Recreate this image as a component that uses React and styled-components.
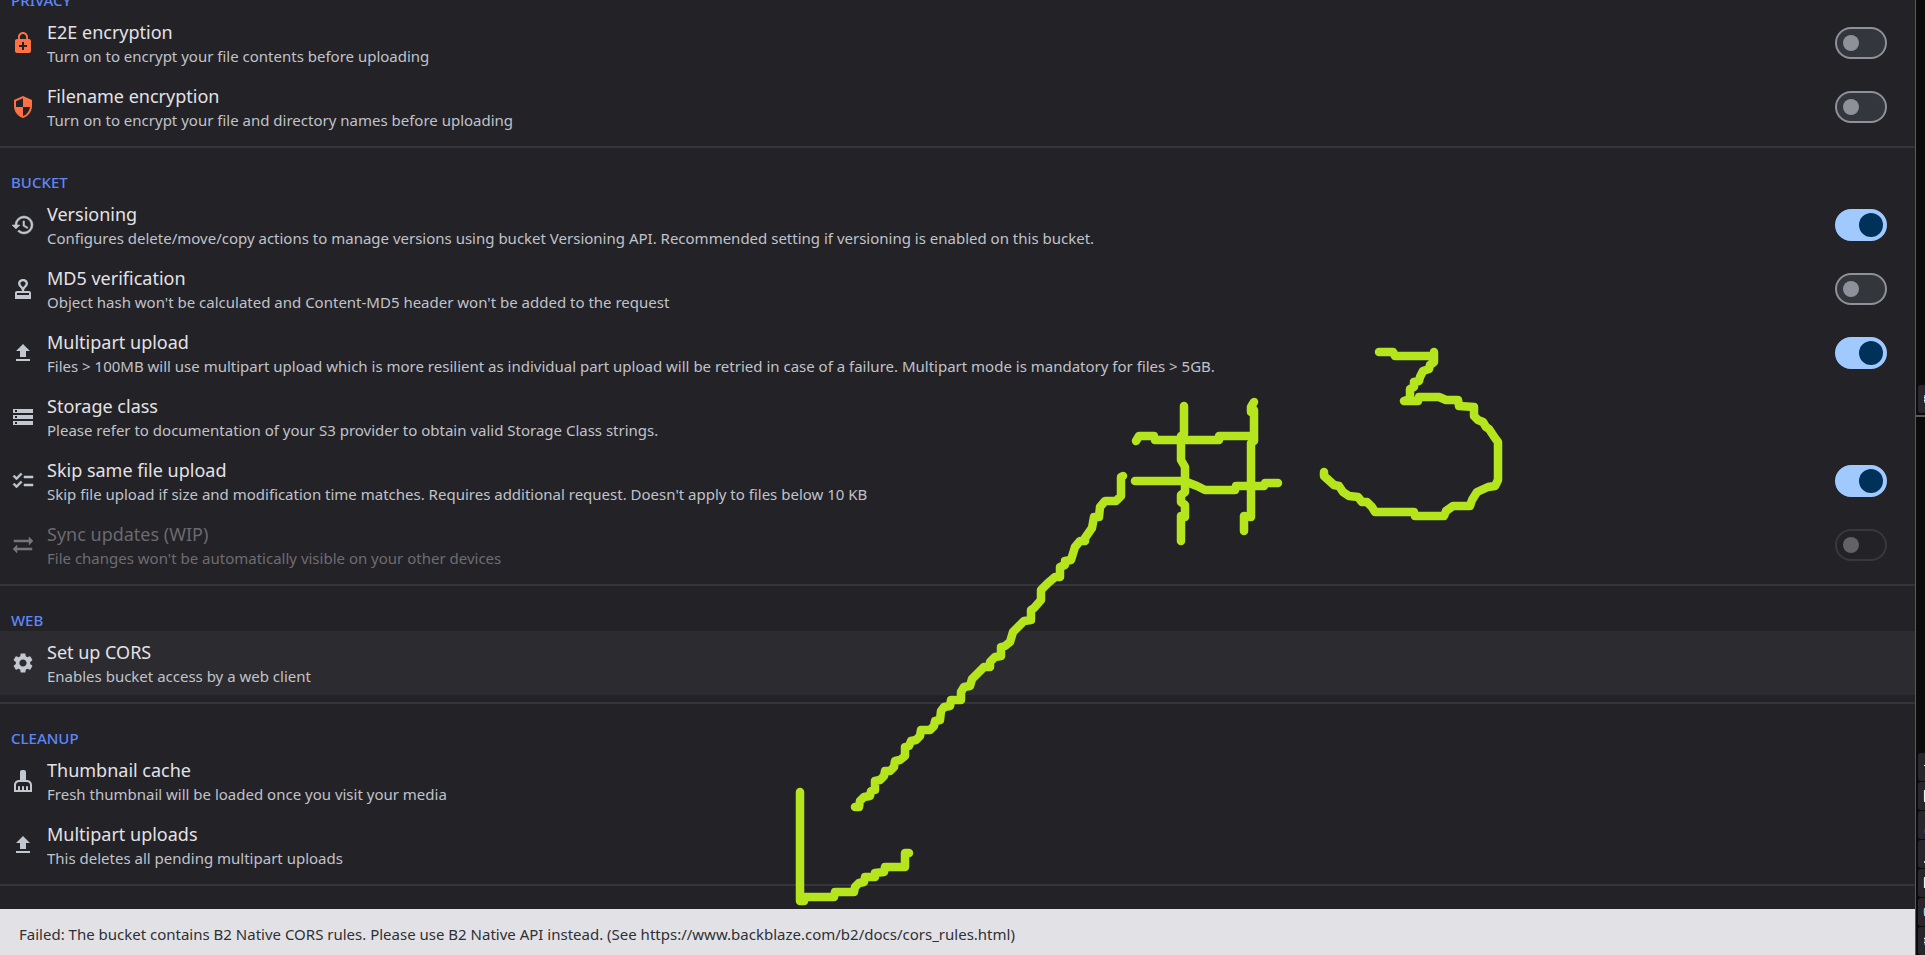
import React, { useLayoutEffect, useRef } from 'react';
import styled, { createGlobalStyle, css } from 'styled-components';
import {
  MdChecklist,
  MdCleaningServices,
  MdEnhancedEncryption,
  MdHistory,
  MdSecurity,
  MdSettings,
  MdStorage,
  MdSyncAlt,
  MdUpload,
} from 'react-icons/md';

const GlobalStyle = createGlobalStyle`
  *, *::before, *::after { box-sizing: border-box; }
  body {
    margin: 0;
    background: #232227;
    font-family: "Segoe UI", "Noto Sans", "Open Sans", sans-serif;
  }
`;

const Page = styled.div`
  position: relative;
  display: flex;
  height: 100vh;
  overflow: hidden;
`;

const SettingsPane = styled.main`
  flex: 1;
  min-width: 0;
  display: flex;
  flex-direction: column;
  background: #232227;
`;

const ScrollArea = styled.div`
  flex: 1;
  min-height: 0;
  overflow-y: auto;
  scrollbar-width: none;
  padding-bottom: 23px;
`;

const Section = styled.section`
  padding: 23px 0 7px;
  border-bottom: 2px solid #35343a;
`;

const SectionLabel = styled.h2`
  margin: 0;
  padding: 0 11px;
  font-size: 15px;
  line-height: 22px;
  font-weight: 500;
  color: #5f87f8;
`;

const rowStyles = css`
  display: flex;
  align-items: center;
  gap: 12px;
  width: 100%;
  height: 64px;
  margin: 0;
  padding: 0 28px 0 11px;
  border: 0;
  font: inherit;
  text-align: left;
  cursor: pointer;
  background: ${(p) => (p.$hovered ? '#2c2b30' : 'transparent')};
`;

const ToggleRow = styled.label`
  ${rowStyles}
`;

const ActionRow = styled.button`
  ${rowStyles}
`;

const RowIcon = styled.span`
  display: flex;
  flex: none;
  font-size: 24px;
  color: ${(p) => (p.$disabled ? '#77767a' : p.$accent ? '#ff7043' : '#c3c7cf')};

  svg {
    stroke-width: ${(p) => (p.$bold ? 0.5 : 0)};
  }

  path[fill='none'] {
    stroke: none;
  }
`;

const RowText = styled.span`
  flex: 1;
  min-width: 0;
  display: flex;
  flex-direction: column;
  padding-top: 2px;
`;

const RowTitle = styled.span`
  font-size: 18px;
  line-height: 24px;
  color: ${(p) => (p.$disabled ? '#6b6a6e' : '#e3e2e6')};
`;

const RowDescription = styled.span`
  font-size: 15px;
  line-height: 24px;
  color: ${(p) => (p.$disabled ? '#6e6d71' : '#c0c3ca')};
`;

const Switch = styled.input`
  appearance: none;
  flex: none;
  display: flex;
  align-items: center;
  width: 52px;
  height: 32px;
  margin: 0;
  padding: 0 6px;
  border: 2px solid #8e9199;
  border-radius: 16px;
  background: #33363a;
  cursor: inherit;

  &::before {
    content: '';
    width: 16px;
    height: 16px;
    border-radius: 50%;
    background: #8e9199;
  }

  &:checked {
    justify-content: flex-end;
    padding: 0 2px;
    border-color: #a0c9ff;
    background: #a0c9ff;
  }

  &:checked::before {
    width: 24px;
    height: 24px;
    background: #003259;
  }

  &:disabled {
    border-color: #39383d;
    background: transparent;
  }

  &:disabled::before {
    background: #636267;
  }
`;

const Snackbar = styled.div`
  flex: none;
  padding: 13px 19px 9px;
  background: #e2e2e6;
  color: #2f3033;
  font-size: 15px;
  line-height: 24px;
`;

const SidePanel = styled.aside`
  flex: none;
  display: flex;
  flex-direction: column;
  width: 10px;
  border-left: 1px solid #5a5a5a;
  background: #0c0b0c;
`;

const TabGroup = styled.div`
  flex: ${(p) => p.$grow} 1 0;
  min-height: 0;
  display: flex;
  flex-direction: column;
  justify-content: flex-end;
  gap: 1px;
  padding-left: 2px;
  overflow: hidden;

  &:first-child {
    padding-bottom: 2px;
    border-bottom: 2px solid #5a5a5a;
  }
`;

const Tab = styled.div`
  flex: none;
  display: flex;
  justify-content: flex-end;
  height: 28px;
  border-radius: 3px 0 0 3px;
  background: #28262b;
`;

const Annotation = styled.svg`
  position: absolute;
  top: 0;
  left: 0;
  pointer-events: none;
`;

function StampIcon(props) {
  return (
    <svg width="1em" height="1em" viewBox="0 0 24 24" fill="currentColor" {...props}>
      <path d="M18 14H6c-1.1 0-2 .9-2 2v6h16v-6c0-1.1-.9-2-2-2zm0 4H6v-2h12v2z" fillRule="evenodd" />
      <path
        d="M12 2C9 2 7 4 7 6.6 7 9.6 11 11 11 14.2h2c0-3.2 4-4.6 4-7.6C17 4 15 2 12 2zm0 2.2c1.6 0 2.6 1 2.6 2.3 0 1.3-1.3 2.2-2.6 3.8-1.3-1.6-2.6-2.5-2.6-3.8 0-1.3 1-2.3 2.6-2.3z"
        fillRule="evenodd"
      />
    </svg>
  );
}

const sections = [
  {
    label: 'PRIVACY',
    rows: [
      { icon: MdEnhancedEncryption, accent: true, title: 'E2E encryption', text: 'Turn on to encrypt your file contents before uploading', toggle: 'off' },
      { icon: MdSecurity, accent: true, title: 'Filename encryption', text: 'Turn on to encrypt your file and directory names before uploading', toggle: 'off' },
    ],
  },
  {
    label: 'BUCKET',
    rows: [
      { icon: MdHistory, bold: true, title: 'Versioning', text: 'Configures delete/move/copy actions to manage versions using bucket Versioning API. Recommended setting if versioning is enabled on this bucket.', toggle: 'on' },
      { icon: StampIcon, title: 'MD5 verification', text: "Object hash won't be calculated and Content-MD5 header won't be added to the request", toggle: 'off' },
      { icon: MdUpload, title: 'Multipart upload', text: 'Files > 100MB will use multipart upload which is more resilient as individual part upload will be retried in case of a failure. Multipart mode is mandatory for files > 5GB.', toggle: 'on' },
      { icon: MdStorage, title: 'Storage class', text: 'Please refer to documentation of your S3 provider to obtain valid Storage Class strings.' },
      { icon: MdChecklist, bold: true, title: 'Skip same file upload', text: "Skip file upload if size and modification time matches. Requires additional request. Doesn't apply to files below 10 KB", toggle: 'on' },
      { icon: MdSyncAlt, bold: true, title: 'Sync updates (WIP)', text: "File changes won't be automatically visible on your other devices", toggle: 'off', disabled: true },
    ],
  },
  {
    label: 'WEB',
    rows: [
      { icon: MdSettings, title: 'Set up CORS', text: 'Enables bucket access by a web client', hovered: true },
    ],
  },
  {
    label: 'CLEANUP',
    rows: [
      { icon: MdCleaningServices, title: 'Thumbnail cache', text: 'Fresh thumbnail will be loaded once you visit your media' },
      { icon: MdUpload, title: 'Multipart uploads', text: 'This deletes all pending multipart uploads' },
    ],
  },
];

/* Each mark is [x, y, width, height, colour] inside a 2x28 sliver of the tab's icon. */
const upperTabs = [
  [[1, 10, 1, 8, '#6fa4ee'], [1, 12, 1, 1, '#ffffff'], [1, 15, 1, 1, '#ffffff']],
];

const lowerTabs = [
  [[1, 12, 1, 1, '#e8f2ff']],
  [[0, 8, 1, 11, '#2c2ca8'], [1, 8, 1, 12, '#dff0ff']],
  [[1, 18, 1, 4, '#3d2a8c']],
  [[1, 21, 1, 2, '#a9dcff']],
  [[0, 9, 1, 10, '#2c2ca8'], [1, 8, 1, 11, '#dff0ff']],
  [[0, 11, 1, 5, '#2a4a9a'], [1, 10, 1, 8, '#8fd0f5']],
  [[1, 10, 1, 8, '#3f6fb8'], [1, 11, 1, 1, '#e8f2ff'], [1, 15, 1, 1, '#e8f2ff']],
];

const strokes = [
  // hash sign
  '1136,441 1139,436 1154,436 1155,440 1219,440 1219,436 1253,436',
  '1135,481 1184,481 1197,486 1205,490 1235,490 1236,486 1264,486 1265,483 1278,483',
  '1184,406 1184,434 1181,436 1181,460 1185,467 1185,492 1181,495 1181,502 1185,505 1185,517 1181,516 1181,541',
  '1254,402 1251,407 1251,412 1254,410 1254,441 1251,443 1251,517 1244,516 1244,531',
  // digit
  '1379,352 1393,352 1395,356 1434,356 1434,352 1434,362 1430,365 1429,369 1423,371 1420,377 1419,381 1414,382 1414,387 1410,389 1410,399 1404,401 1418,401 1419,397 1439,397 1446,400 1458,400 1459,406 1474,407 1474,416 1478,420 1483,422 1486,427 1489,429 1495,438 1498,442 1498,480 1495,486 1488,487 1477,492 1472,500 1470,506 1453,506 1446,511 1444,516 1415,516 1414,512 1375,512 1372,507 1367,502 1362,502 1358,497 1349,496 1343,492 1339,486 1334,485 1324,476 1324,472',
  // arrow shaft
  '1123,476 1121,477 1121,496 1116,501 1105,501 1100,507 1099,517 1094,517 1092,528 1085,538 1085,541 1080,541 1075,547 1071,560 1065,561 1065,565 1060,567 1060,577 1055,577 1048,583 1041,590 1041,600 1034,608 1031,610 1031,620 1024,621 1013,632 1010,642 1005,646 1001,647 1001,656 995,657 990,662 990,667 984,667 972,679 970,686 964,687 961,692 961,700 951,700 950,706 944,707 941,711 940,720 935,721 934,726 930,730 921,730 920,736 916,740 911,741 909,746 905,747 905,756 900,760 895,761 894,767 890,771 885,771 884,776 880,780 875,781 875,790 871,791 870,796 864,797 860,801 859,807 855,807',
  // arrow head
  '800,792 800,901 804,901 805,897 834,897 835,892 854,892 855,887 859,883 864,882 865,877 875,877 875,873 884,872 885,867 905,867 905,853 909,853',
];

function SettingRow({ icon: Icon, accent, bold, title, text, toggle, disabled, hovered }) {
  const Row = toggle ? ToggleRow : ActionRow;
  return (
    <Row $hovered={hovered}>
      <RowIcon $accent={accent} $bold={bold} $disabled={disabled}>
        <Icon stroke="currentColor" aria-hidden="true" />
      </RowIcon>
      <RowText>
        <RowTitle $disabled={disabled}>{title}</RowTitle>
        <RowDescription $disabled={disabled}>{text}</RowDescription>
      </RowText>
      {toggle && <Switch type="checkbox" role="switch" defaultChecked={toggle === 'on'} disabled={disabled} />}
    </Row>
  );
}

function Tabs({ tabs, grow }) {
  return (
    <TabGroup $grow={grow}>
      {tabs.map((marks, i) => (
        <Tab key={i}>
          <svg width="2" height="28" aria-hidden="true">
            {marks.map(([x, y, w, h, fill], j) => (
              <rect key={j} x={x} y={y} width={w} height={h} fill={fill} />
            ))}
          </svg>
        </Tab>
      ))}
    </TabGroup>
  );
}

export default function App() {
  const list = useRef(null);

  // The list opens at its end, with the last section above the message.
  useLayoutEffect(() => {
    list.current.scrollTop = list.current.scrollHeight;
  }, []);

  return (
    <Page>
      <GlobalStyle />
      <SettingsPane>
        <ScrollArea ref={list}>
          {sections.map((section) => (
            <Section key={section.label}>
              <SectionLabel>{section.label}</SectionLabel>
              {section.rows.map((row) => (
                <SettingRow key={row.title} {...row} />
              ))}
            </Section>
          ))}
        </ScrollArea>
        <Snackbar role="status">
          Failed: The bucket contains B2 Native CORS rules. Please use B2 Native API instead. (See
          https://www.backblaze.com/b2/docs/cors_rules.html)
        </Snackbar>
      </SettingsPane>
      <SidePanel>
        <Tabs tabs={upperTabs} grow={413} />
        <Tabs tabs={lowerTabs} grow={538} />
      </SidePanel>
      <Annotation
        width="1520"
        height="920"
        viewBox="0 0 1520 920"
        fill="none"
        stroke="#b5e61d"
        strokeWidth="8.5"
        strokeLinecap="round"
        strokeLinejoin="round"
        aria-hidden="true"
      >
        {strokes.map((points) => (
          <polyline key={points} points={points} />
        ))}
      </Annotation>
    </Page>
  );
}
